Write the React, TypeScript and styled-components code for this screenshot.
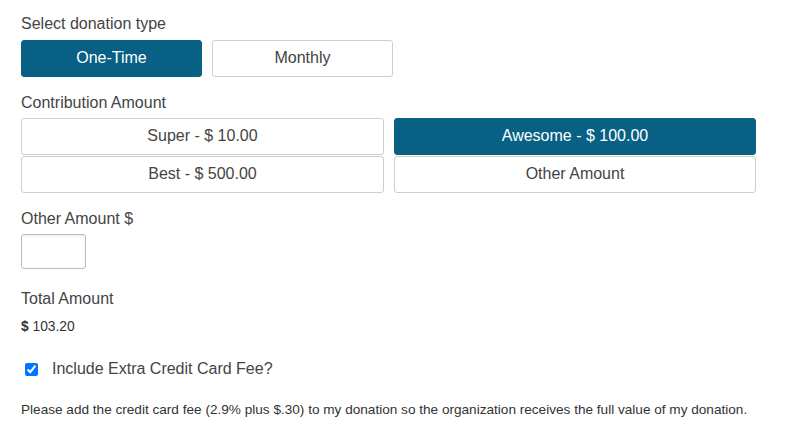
import React, { useState } from "react";
import styled, { createGlobalStyle } from "styled-components";

const Global = createGlobalStyle`
  html, body { margin: 0; padding: 0; background: #fff; }
  body { font-family: "Liberation Sans", Arial, Helvetica, sans-serif; color: #444; }
  * { box-sizing: border-box; }
`;

const Page = styled.div`
  padding: 14px 0 0 21px;
  width: 757px;
`;

const Label = styled.div<{ $top?: number }>`
  font-size: 16px;
  line-height: 20px;
  color: #444;
  margin-top: ${(p) => p.$top ?? 0}px;
`;

const TypeRow = styled.div`
  display: flex;
  gap: 10px;
  margin-top: 6px;
`;

const OptionButton = styled.button<{ $active?: boolean; $w?: number }>`
  font-family: inherit;
  font-size: 16px;
  height: 37px;
  width: ${(p) => (p.$w ? `${p.$w}px` : "auto")};
  border-radius: 3px;
  border: 1px solid ${(p) => (p.$active ? "#0a6086" : "#cfcfcf")};
  background: ${(p) => (p.$active ? "#086084" : "#fff")};
  color: ${(p) => (p.$active ? "#fff" : "#444")};
  padding: 0 0 2px;
  cursor: pointer;
`;

const AmountGrid = styled.div`
  display: grid;
  grid-template-columns: 363px 362px;
  column-gap: 10px;
  row-gap: 1px;
  margin-top: 5px;
`;

const AmountInput = styled.input`
  display: block;
  margin-top: 5px;
  width: 65px;
  height: 35px;
  border: 1px solid #bdbdbd;
  border-radius: 3px;
  box-shadow: inset 0 1px 2px rgba(0, 0, 0, 0.08);
  font-size: 14px;
  padding: 4px;
`;

const Total = styled.div`
  font-size: 13.8px;
  margin-top: 10px;
  color: #333;
  b { font-weight: bold; }
`;

const CheckRow = styled.label`
  display: flex;
  align-items: center;
  margin-top: 26px;
  font-size: 16px;
  color: #444;
  input {
    margin: 0 14px 0 4px;
    width: 13px;
    height: 13px;
  }
`;

const Note = styled.p`
  font-size: 13.6px;
  margin: 24px 0 0;
  color: #333;
`;

export default function App() {
  const [type, setType] = useState("one");
  const [amount, setAmount] = useState("awesome");
  const [fee, setFee] = useState(true);
  return (
    <Page>
      <Global />
      <Label>Select donation type</Label>
      <TypeRow>
        <OptionButton $w={181} $active={type === "one"} onClick={() => setType("one")}>
          One-Time
        </OptionButton>
        <OptionButton $w={181} $active={type === "monthly"} onClick={() => setType("monthly")}>
          Monthly
        </OptionButton>
      </TypeRow>
      <Label $top={16}>Contribution Amount</Label>
      <AmountGrid>
        <OptionButton $active={amount === "super"} onClick={() => setAmount("super")}>
          Super - $ 10.00
        </OptionButton>
        <OptionButton $active={amount === "awesome"} onClick={() => setAmount("awesome")}>
          Awesome - $ 100.00
        </OptionButton>
        <OptionButton $active={amount === "best"} onClick={() => setAmount("best")}>
          Best - $ 500.00
        </OptionButton>
        <OptionButton $active={amount === "other"} onClick={() => setAmount("other")}>
          Other Amount
        </OptionButton>
      </AmountGrid>
      <Label $top={16}>Other Amount $</Label>
      <AmountInput type="text" />
      <Label $top={20}>Total Amount</Label>
      <Total>
        <b>$</b> 103.20
      </Total>
      <CheckRow>
        <input type="checkbox" checked={fee} onChange={(e) => setFee(e.target.checked)} />
        Include Extra Credit Card Fee?
      </CheckRow>
      <Note>
        Please add the credit card fee (2.9% plus $.30) to my donation so the organization receives the full value of my donation.
      </Note>
    </Page>
  );
}
